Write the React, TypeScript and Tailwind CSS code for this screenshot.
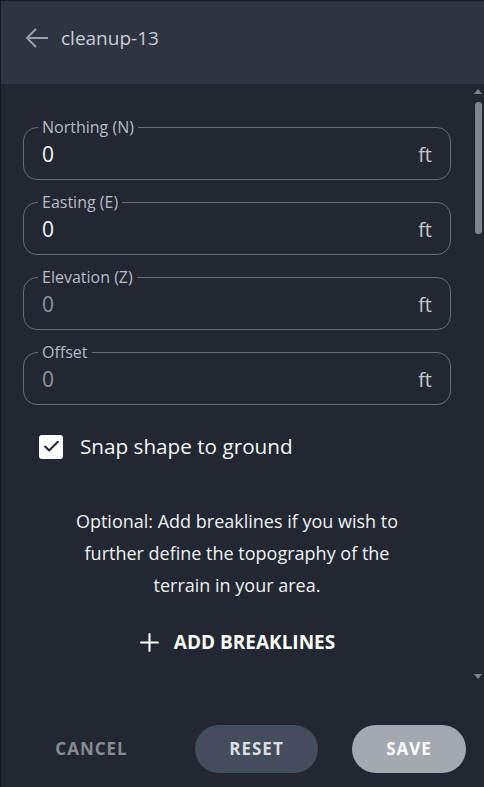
import { Check, Plus } from "lucide-react";

type Field = { label: string; value: string; active: boolean };

const fields: Field[] = [
  { label: "Northing (N)", value: "0", active: true },
  { label: "Easting (E)", value: "0", active: true },
  { label: "Elevation (Z)", value: "0", active: false },
  { label: "Offset", value: "0", active: false },
];

function CoordField({ label, value, active }: Field) {
  return (
    <fieldset className="m-0 rounded-[14px] border border-[#676c76] px-[14px] pb-[7px]">
      <legend className="px-1 text-[16px] leading-[18px] text-[#b8bcc3]">{label}</legend>
      <div className="flex h-[36px] items-center justify-between pl-1 pr-[4px] pt-[1px]">
        <span className={active ? "text-[21px] text-[#f4f5f7]" : "text-[21px] text-[#8f949c]"}>
          {value}
        </span>
        <span className="text-[20px] text-[#c4c8ce]">ft</span>
      </div>
    </fieldset>
  );
}

function Scrollbar() {
  return (
    <div className="flex w-[12px] shrink-0 flex-col items-center pt-[5px] pb-[8px]">
      <div className="h-0 w-0 border-x-[4px] border-b-[5px] border-x-transparent border-b-[#80858d]" />
      <div className="mt-[8px] h-[132px] w-[7px] rounded-full bg-[#80858d]" />
      <div className="flex-1" />
      <div className="h-0 w-0 border-x-[4px] border-t-[5px] border-x-transparent border-t-[#80858d]" />
    </div>
  );
}

export default function App() {
  return (
    <div
      className="flex h-[787px] w-[484px] flex-col border-l border-t border-[#171a20] bg-[#222731]"
      style={{ fontFamily: "'Open Sans', 'Noto Sans', sans-serif" }}
    >
      {/* Header */}
      <div className="flex h-[83px] shrink-0 items-center gap-[12px] bg-[#2e3440] pl-[24px] pb-[9px]">
        <svg width="24" height="22" viewBox="0 0 24 22" fill="none" stroke="#9aa0a8" strokeWidth="2">
          <path d="M23 11H2.5" />
          <path d="M11 2 2 11l9 9" />
        </svg>
        <span className="text-[19px] text-[#c9cdd5]">cleanup-13</span>
      </div>

      {/* Body */}
      <div className="flex h-[603px] shrink-0">
        <div className="flex flex-1 flex-col pl-[22px] pr-[21px] pt-[34px]">
          <div className="flex flex-col gap-[13px]">
            {fields.map((f) => (
              <CoordField key={f.label} {...f} />
            ))}
          </div>

          <div className="mt-[26px] flex items-center gap-[17px] pl-[16px]">
            <div className="flex h-[24px] w-[24px] items-center justify-center rounded-[3px] bg-white">
              <Check size={19} strokeWidth={2.6} color="#222731" />
            </div>
            <span className="text-[20.7px] text-[#f4f5f7]">Snap shape to ground</span>
          </div>

          <p className="mx-auto mt-[43px] max-w-[345px] text-center text-[18px] leading-[32px] text-[#eef0f3]">
            Optional: Add breaklines if you wish to further define the topography of the terrain in your area.
          </p>

          <button className="mx-auto mt-[27px] flex items-center gap-[10px] pr-[4px] text-[19px] font-bold text-white">
            <Plus size={29} strokeWidth={1.7} />
            ADD BREAKLINES
          </button>
        </div>
        <Scrollbar />
      </div>

      {/* Footer */}
      <div className="flex items-center pl-[29px] pt-[38px]">
        <button className="h-[48px] w-[123px] text-[17px] font-bold tracking-[1px] text-[#878c93]">
          CANCEL
        </button>
        <button className="ml-[42px] h-[48px] w-[123px] rounded-full bg-[#444d5b] text-[17px] font-bold tracking-[1px] text-[#dcdee2]">
          RESET
        </button>
        <button className="ml-[34px] h-[48px] w-[114px] rounded-full bg-[#a4a9b0] text-[17px] font-bold tracking-[1px] text-white">
          SAVE
        </button>
      </div>
    </div>
  );
}
